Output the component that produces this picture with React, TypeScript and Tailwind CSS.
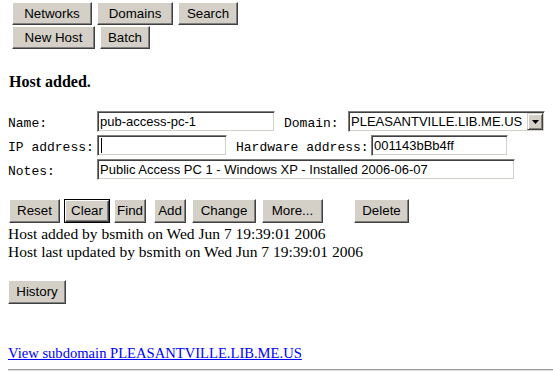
import type { ReactNode } from "react";

const sans = { fontFamily: '"Liberation Sans", Arial, sans-serif' };

function Btn({
  children,
  className = "",
  isDefault = false,
}: {
  children: ReactNode;
  className?: string;
  isDefault?: boolean;
}) {
  const bevel =
    "border border-t-white border-l-white border-r-[#404040] border-b-[#404040] shadow-[inset_-1px_-1px_0_#808080]";
  if (isDefault) {
    return (
      <div className={`flex border border-black ${className}`}>
        <button
          className={`flex h-full w-full items-center justify-center bg-[#d4d0c8] text-[13.33px] text-black ${bevel}`}
          style={sans}
        >
          {children}
        </button>
      </div>
    );
  }
  return (
    <button
      className={`flex items-center justify-center bg-[#d4d0c8] text-[13.33px] text-black ${bevel} ${className}`}
      style={sans}
    >
      {children}
    </button>
  );
}

function Field({ children, className = "" }: { children?: ReactNode; className?: string }) {
  return (
    <div
      className={`flex h-[21px] items-center border border-t-[#808080] border-l-[#808080] border-b-white border-r-white bg-white pl-[2px] text-[13px] text-black shadow-[inset_1px_1px_0_#404040,inset_-1px_-1px_0_#d4d0c8] ${className}`}
      style={sans}
    >
      {children}
    </div>
  );
}

function Label({ children, className = "" }: { children: ReactNode; className?: string }) {
  return (
    <span
      className={`text-[13px] leading-[16px] text-black ${className}`}
      style={{ fontFamily: '"Liberation Mono", "Courier New", monospace' }}
    >
      {children}
    </span>
  );
}

export default function App() {
  return (
    <div
      className="h-[375px] w-[553px] overflow-hidden bg-white pt-[2px] text-black"
      style={{ fontFamily: '"Liberation Serif", "Times New Roman", serif' }}
    >
      {/* nav buttons */}
      <div className="flex flex-col gap-[1px] pl-[12px]">
        <div className="flex gap-[5px]">
          <Btn className="h-[23px] w-[80px]">Networks</Btn>
          <Btn className="h-[23px] w-[76px]">Domains</Btn>
          <Btn className="h-[23px] w-[60px]">Search</Btn>
        </div>
        <div className="flex gap-[5px]">
          <Btn className="h-[23px] w-[83px]">New Host</Btn>
          <Btn className="h-[23px] w-[50px]">Batch</Btn>
        </div>
      </div>

      <div className="mt-[24px] pl-[9px] text-[16px] font-bold leading-[18px]">Host added.</div>

      {/* host form */}
      <div className="mt-[20px] flex flex-col gap-[3px] pl-[8px]">
        <div className="flex items-end">
          <Label className="w-[89px]">Name:</Label>
          <Field className="w-[178px]">pub-access-pc-1</Field>
          <Label className="ml-[9px] w-[64px]">Domain:</Label>
          <div
            className="flex h-[21px] w-[197px] items-center justify-between border border-t-[#808080] border-l-[#808080] border-b-white border-r-white bg-white pl-[2px] pr-[1px] text-[13px] shadow-[inset_1px_1px_0_#404040,inset_-1px_-1px_0_#d4d0c8]"
            style={sans}
          >
            <span>PLEASANTVILLE.LIB.ME.US</span>
            <span className="flex h-[17px] w-[16px] items-center justify-center border border-t-[#d4d0c8] border-l-[#d4d0c8] border-r-[#404040] border-b-[#404040] bg-[#d4d0c8] shadow-[inset_1px_1px_0_white,inset_-1px_-1px_0_#808080]">
              <svg width="7" height="4" viewBox="0 0 7 4">
                <path d="M0 0h7L3.5 4z" fill="black" />
              </svg>
            </span>
          </div>
        </div>
        <div className="flex items-end">
          <Label className="w-[89px]">IP address:</Label>
          <Field className="w-[130px]">
            <span className="ml-[1px] h-[15px] w-[1px] bg-black" />
          </Field>
          <Label className="ml-[9px] w-[135px]">Hardware address:</Label>
          <Field className="w-[137px]">001143bBb4ff</Field>
        </div>
        <div className="flex items-end">
          <Label className="w-[89px]">Notes:</Label>
          <Field className="w-[418px]">Public Access PC 1 - Windows XP - Installed 2006-06-07</Field>
        </div>
      </div>

      {/* actions */}
      <div className="mt-[19px] flex items-center pl-[9px]">
        <Btn className="h-[24px] w-[51px]">Reset</Btn>
        <Btn isDefault className="ml-[4px] h-[24px] w-[46px]">Clear</Btn>
        <Btn className="ml-[4px] h-[24px] w-[32px]">Find</Btn>
        <Btn className="ml-[8px] h-[24px] w-[32px]">Add</Btn>
        <Btn className="ml-[6px] h-[24px] w-[64px]">Change</Btn>
        <Btn className="ml-[6px] h-[24px] w-[61px]">More...</Btn>
        <Btn className="ml-[31px] h-[24px] w-[55px]">Delete</Btn>
      </div>

      <div className="mt-[2px] pl-[8px] text-[15.5px] leading-[18px]">
        <div>Host added by bsmith on Wed Jun 7 19:39:01 2006</div>
        <div>Host last updated by bsmith on Wed Jun 7 19:39:01 2006</div>
      </div>

      <div className="mt-[19px] pl-[8px]">
        <Btn className="h-[24px] w-[58px]">History</Btn>
      </div>

      <div className="mt-[40px] pl-[8px] text-[14.6px] leading-[18px]">
        <a href="#" className="text-[#0000ff] underline">
          View subdomain PLEASANTVILLE.LIB.ME.US
        </a>
      </div>

      <div className="ml-[8px] mt-[7px] h-[2px] border-t border-b border-t-[#9a9a9a] border-b-[#e0e0e0]" />
    </div>
  );
}
